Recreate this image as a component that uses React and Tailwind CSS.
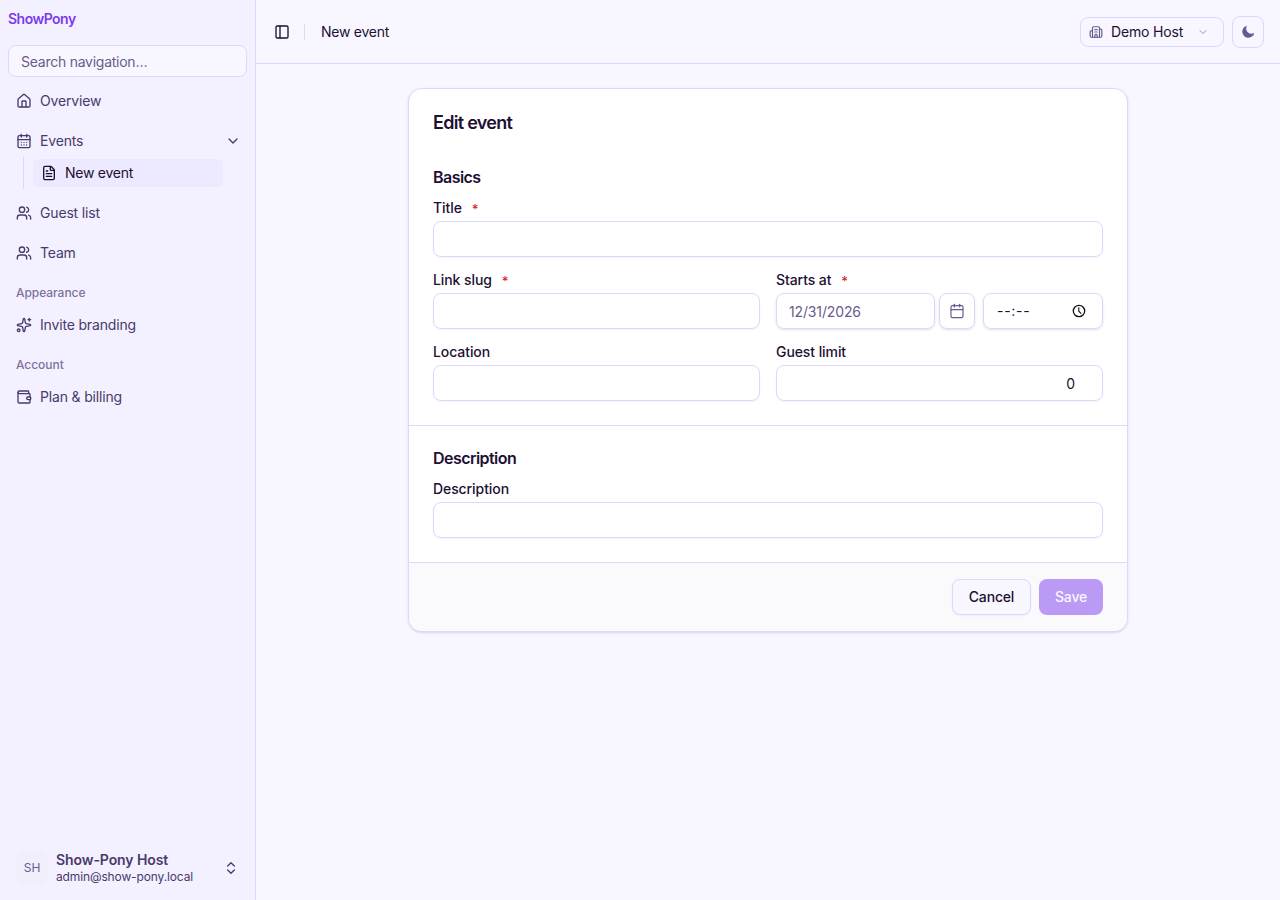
import React, { useState } from "react";
import {
  Building2,
  Calendar,
  CalendarDays,
  ChevronDown,
  ChevronsUpDown,
  FileText,
  House,
  PanelLeft,
  Sparkles,
  Users,
  Wallet,
} from "lucide-react";

const NavItem = ({ icon: Icon, label, children }) => (
  <a className="flex h-8 items-center gap-2 rounded-md pr-1.5 pl-2 text-sm tracking-[-0.012em]">
    <Icon size={16} />
    <span className="flex-1">{label}</span>
    {children}
  </a>
);

const GroupLabel = ({ children }) => (
  <div className="flex h-8 items-center px-2 text-xs font-medium tracking-[-0.004em] text-[#7f719e]">
    {children}
  </div>
);

const Sidebar = () => {
  const [open, setOpen] = useState(true);

  return (
    <aside className="flex w-64 shrink-0 flex-col border-r border-[#ddd6fe] bg-[#f3f0ff] text-[#4a3a6b]">
      <div className="p-2">
        <div className="flex h-[22px] items-center text-sm font-semibold tracking-[-0.037em] text-[#7c3aed]">
          ShowPony
        </div>
        <input
          placeholder="Search navigation…"
          className="mt-[15px] block h-8 w-full rounded-lg border border-[#ddd6fe] bg-[#f8f7ff] px-3 text-sm tracking-[-0.018em] outline-none placeholder:text-[#6b5b8c]"
        />
      </div>

      <nav className="flex flex-1 flex-col px-2">
        <NavItem icon={House} label="Overview" />
        <div className="mt-2" onClick={() => setOpen(!open)}>
          <NavItem icon={CalendarDays} label="Events">
            <ChevronDown size={16} />
          </NavItem>
        </div>
        {open && (
          <div className="mr-6 ml-[15px] border-l border-[#ddd6fe] py-0.5 pl-[9px]">
            <a className="flex h-7 items-center gap-2 rounded-md bg-[#ede9fe] px-2 text-sm tracking-[-0.018em] text-[#1e1033]">
              <FileText size={16} />
              New event
            </a>
          </div>
        )}
        <div className="mt-2">
          <NavItem icon={Users} label="Guest list" />
        </div>
        <div className="mt-2">
          <NavItem icon={Users} label="Team" />
        </div>
        <div className="mt-2">
          <GroupLabel>Appearance</GroupLabel>
          <NavItem icon={Sparkles} label="Invite branding" />
        </div>
        <div className="mt-2">
          <GroupLabel>Account</GroupLabel>
          <NavItem icon={Wallet} label="Plan &amp; billing" />
        </div>
      </nav>

      <div className="p-2">
        <div className="flex h-12 items-center gap-2 px-2">
          <div className="flex size-8 items-center justify-center rounded-lg bg-[#f1eefb] text-xs text-[#6b5b8c]">
            SH
          </div>
          <div className="flex-1">
            <div className="-mt-px text-sm leading-[18px] font-semibold tracking-[-0.006em]">
              Show-Pony Host
            </div>
            <div className="text-xs leading-[15px] tracking-[-0.011em]">
              admin@show-pony.local
            </div>
          </div>
          <ChevronsUpDown size={16} />
        </div>
      </div>
    </aside>
  );
};

const Header = () => (
  <header className="flex h-16 items-center border-b border-[#ddd6fe] px-4">
    <button className="flex w-5 justify-center">
      <PanelLeft size={16} />
    </button>
    <div className="mr-4 ml-3 h-4 w-px bg-[#ddd6fe]" />
    <span className="text-sm tracking-[-0.018em]">New event</span>
    <button className="ml-auto flex h-[30px] w-36 items-center rounded-lg border border-[#ddd6fe] px-2 text-sm">
      <Building2 size={14} className="text-[#6b5b8c]" />
      <span className="ml-2 tracking-[-0.012em]">Demo Host</span>
      <ChevronDown size={12} className="mr-1.5 ml-auto text-[#9a8eb5]" />
    </button>
    <button className="ml-2 flex size-8 items-center justify-center rounded-lg border border-[#ddd6fe] text-[#6b5b8c]">
      <svg width="14" height="14" viewBox="0 0 24 24" fill="currentColor">
        <path d="M9.500 1.700a.75.75 0 0 1 .16.82A9 9 0 0 0 18 15a9 9 0 0 0 3.460-.69.75.75 0 0 1 .98.98A10.500 10.500 0 1 1 8.710 1.560a.75.75 0 0 1 .8.14Z" />
      </svg>
    </button>
  </header>
);

const Field = ({ label, required, children }) => (
  <div>
    <div className="flex h-5 items-center text-sm font-medium tracking-[-0.006em]">
      {label}
      {required && (
        <span className="ml-2.5 pt-0.5 text-[13px] text-[#dc2626]">*</span>
      )}
    </div>
    <div className="mt-[3px]">{children}</div>
  </div>
);

const TextInput = ({ value }) => (
  <input
    defaultValue={value}
    className="block h-9 w-full rounded-lg border border-[#ddd6fe] pr-[27px] pl-3 text-right text-sm shadow-xs outline-none"
  />
);

const DateTimeInput = () => (
  <div className="flex">
    <input
      placeholder="12/31/2026"
      className="h-9 w-[159px] rounded-lg border border-[#ddd6fe] px-3 text-sm tracking-[-0.01em] shadow-sm outline-none placeholder:text-[#6b5b8c]"
    />
    <button className="ml-1 flex size-9 items-center justify-center rounded-lg border border-[#ddd6fe] text-[#6b5b8c] shadow-sm">
      <Calendar size={16} strokeWidth={1.75} />
    </button>
    <div className="ml-2 flex h-9 flex-1 items-center justify-between rounded-lg border border-[#ddd6fe] pr-4 pl-[13px] text-sm tracking-[0.05em] shadow-sm">
      <span>--:--</span>
      <svg width="14" height="14" viewBox="0 0 13 13" fill="none" stroke="#111">
        <circle cx="6.5" cy="6.5" r="5.3" strokeWidth="1.2" />
        <path d="M6.300 3v3.700l2.300 2.300" strokeWidth="1" />
      </svg>
    </div>
  </div>
);

const EventForm = () => (
  <form className="mx-auto mt-6 w-[720px] overflow-hidden rounded-[14px] border border-[#ddd6fe] bg-white shadow-sm">
    <h1 className="px-6 pt-5 text-lg leading-7 font-semibold tracking-[-0.04em]">
      Edit event
    </h1>

    <section className="px-6 pt-7 pb-6">
      <h2 className="text-base leading-6 font-semibold tracking-[-0.034em]">
        Basics
      </h2>
      <div className="mt-[9px] grid grid-cols-2 gap-x-4 gap-y-[13px]">
        <div className="col-span-2">
          <Field label="Title" required>
            <TextInput />
          </Field>
        </div>
        <Field label="Link slug" required>
          <TextInput />
        </Field>
        <Field label="Starts at" required>
          <DateTimeInput />
        </Field>
        <Field label="Location">
          <TextInput />
        </Field>
        <Field label="Guest limit">
          <TextInput value="0" />
        </Field>
      </div>
    </section>

    <section className="border-t border-[#ddd6fe] px-6 pt-5 pb-6">
      <h2 className="text-base leading-6 font-semibold tracking-[-0.034em]">
        Description
      </h2>
      <div className="mt-[9px]">
        <Field label="Description">
          <TextInput />
        </Field>
      </div>
    </section>

    <footer className="flex justify-end gap-2 border-t border-[#ddd6fe] bg-[#fafafc] px-6 py-4 text-sm font-medium tracking-[-0.012em]">
      <button
        type="button"
        className="h-9 w-[79px] rounded-lg border border-[#ddd6fe] bg-[#f8f7ff] shadow-xs"
      >
        Cancel
      </button>
      <button
        type="button"
        disabled
        className="h-9 w-16 rounded-lg bg-[#bb9af6] text-[#f8f7ff]"
      >
        Save
      </button>
    </footer>
  </form>
);

const App = () => {
  return (
    <div className="flex h-screen bg-[#f8f7ff] font-['Inter',sans-serif] text-[#1e1033] antialiased">
      <Sidebar />
      <main className="flex-1">
        <Header />
        <EventForm />
      </main>
    </div>
  );
};

export default App;
